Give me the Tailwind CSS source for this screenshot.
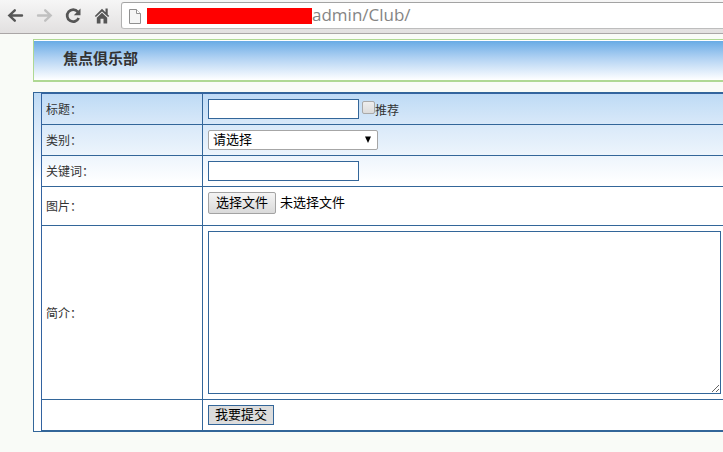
<!DOCTYPE html>
<html lang="zh-CN">
<head>
<meta charset="utf-8">
<meta name="viewport" content="width=device-width, initial-scale=1">
<title>焦点俱乐部</title>
<script src="https://cdn.jsdelivr.net/npm/@tailwindcss/browser@4"></script>
</head>
<body class="min-h-screen overflow-x-hidden bg-[#f9fbf7] font-['Liberation_Sans','Noto_Sans_CJK_SC',sans-serif] text-xs text-[#333]">
<header class="flex h-[34px] items-start border-b border-[#aaa6a6] bg-linear-to-b from-[#f6f6f6] to-[#e2e0e0] pt-[2px]">
  <nav class="flex h-[27px] w-[121px] shrink-0 items-center gap-[11px] pl-[6px]" aria-label="浏览器导航">
    <button type="button" aria-label="后退" class="size-[18px]">
      <svg viewBox="0 0 18 18" class="size-[18px]" fill="none" stroke="#555" stroke-width="2.400" stroke-linecap="round"><path d="M16 8.500H3.500M8.800 3.300 3.300 8.500l5.500 5.200"/></svg>
    </button>
    <button type="button" aria-label="前进" class="size-[18px]">
      <svg viewBox="0 0 18 18" class="size-[18px]" fill="none" stroke="#c0c0c0" stroke-width="2.400" stroke-linecap="round"><path d="M3 8.500h12.500M10.200 3.300l5.500 5.200-5.500 5.200"/></svg>
    </button>
    <button type="button" aria-label="重新加载" class="size-[18px]">
      <svg viewBox="0 0 18 18" class="size-[18px]"><path d="M13.800 4.800A6 6 0 1 0 14.700 11" fill="none" stroke="#555" stroke-width="2.700"/><path d="M16.500 1.500v6.700H9.800z" fill="#555"/></svg>
    </button>
    <button type="button" aria-label="主页" class="size-[18px]">
      <svg viewBox="0 0 18 18" class="size-[18px]" fill="#555"><path d="M9 1.800 1.800 9l1.100 1.100L9 4.400l6.100 5.700L16.200 9l-1.500-1.500V1.500h-2.200v3.800z"/><path d="M9 5.800 3.800 10.700V16.500h3.700v-4.800h3v4.800h3.700v-5.800z"/></svg>
    </button>
  </nav>
  <div class="flex h-[27px] min-w-0 flex-1 items-center rounded-l-[3px] border border-r-0 border-t-[#a3a3a3] border-b-[#bdbdbd] border-l-[#b0b0b0] bg-white pl-[7px]">
    <svg viewBox="0 0 12 16" class="h-4 w-3 shrink-0" fill="#f5f5f5" stroke="#909090"><path d="M.5 1.500H7.500L11.500 5.500V15.500H.5z"/><path d="M7.500 1.500V5.500H11.500" fill="#fff"/></svg>
    <span class="ml-[6px] h-4 w-[165px] shrink-0 bg-[#f00]"></span>
    <span class="pb-[2px] font-['Open_Sans',sans-serif] text-[17px] leading-[22px] text-[#858585]">admin/Club/</span>
  </div>
</header>
<main class="pt-[5px] pl-[33px]">
  <div class="border border-r-0 border-b-2 border-[#afd893] bg-white pt-px">
    <h1 class="bg-linear-to-b from-[#68abe5] via-[#b3d3f3] via-45% to-white pt-[6px] pb-[9px] pl-[29px] text-[15px] leading-[24px] font-bold">焦点俱乐部</h1>
  </div>
  <form class="mt-[10px] border border-r-0 border-[#336699] bg-white bg-linear-to-b from-[#bddaf5] via-[#d9e9f9] via-[32px] to-white to-[90px] pl-[7px]" onsubmit="return false">
    <table class="w-full border-separate border-spacing-0 border-t border-l border-[#3363a0] [&_td]:border-b [&_td]:border-[#336699] [&_td]:pl-[5px] [&_th]:w-[161px] [&_th]:border-r [&_th]:border-b [&_th]:border-[#336699] [&_th]:pt-[2px] [&_th]:pl-1 [&_th]:text-left [&_th]:font-normal">
      <tbody>
        <tr class="h-[31px]">
          <th scope="row"><label for="title">标题：</label></th>
          <td>
            <div class="flex items-center">
              <input id="title" type="text" class="h-5 w-[151px] border border-[#336699] bg-white px-1 text-[13px]">
              <label class="ml-[3px] flex h-5 items-start">
                <input type="checkbox" class="mt-[2px] size-[13px] appearance-none rounded-[2px] border border-[#a9a9a9] bg-linear-to-b from-[#eee] to-[#dcdcdc] checked:bg-[#336699]">
                <span class="pt-1 leading-4">推荐</span>
              </label>
            </div>
          </td>
        </tr>
        <tr class="h-[31px]">
          <th scope="row"><label for="category">类别：</label></th>
          <td>
            <div class="relative flex w-[170px]">
              <select id="category" class="h-5 w-full appearance-none rounded-[2px] border border-[#a6a6a6] bg-white pl-1 text-[13px] leading-[18px] text-black"><option>请选择</option></select>
              <svg viewBox="0 0 6 7" class="pointer-events-none absolute top-[6px] right-[7px] h-[7px] w-[6px]"><path d="M0 .5h6L3 7z"/></svg>
            </div>
          </td>
        </tr>
        <tr class="h-[31px]">
          <th scope="row"><label for="keywords">关键词：</label></th>
          <td><input id="keywords" type="text" class="block h-5 w-[151px] border border-[#336699] bg-white px-1 text-[13px]"></td>
        </tr>
        <tr class="h-[39px]">
          <th scope="row"><label for="picture">图片：</label></th>
          <td class="pt-[5px] align-top">
            <div class="relative flex w-fit items-center gap-1 text-[13px] leading-5 text-black">
              <span class="flex h-[22px] w-[68px] items-center justify-center rounded-[2px] border border-[#a3a3a3] bg-linear-to-b from-[#f4f4f4] to-[#dadada]">选择文件</span>
              <span>未选择文件</span>
              <input id="picture" type="file" class="absolute inset-0 w-full opacity-0">
            </div>
          </td>
        </tr>
        <tr class="h-[174px]">
          <th scope="row"><label for="intro">简介：</label></th>
          <td class="pr-[2px]"><textarea id="intro" class="block h-[163px] w-full resize border border-[#336699] bg-white p-1 text-[13px]"></textarea></td>
        </tr>
        <tr class="h-[31px]">
          <th></th>
          <td><button type="submit" class="flex h-5 w-[66px] items-center justify-center border border-[#336699] bg-[#dcdcdc] text-[13px] leading-[18px] text-black">我要提交</button></td>
        </tr>
      </tbody>
    </table>
  </form>
</main>
</body>
</html>
